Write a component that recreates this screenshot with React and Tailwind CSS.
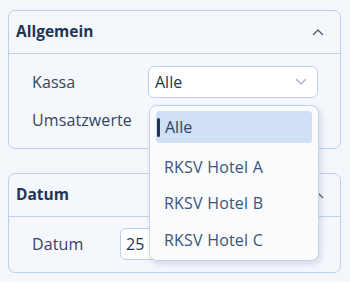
import React from "react";

const Up = ({ className }) => (
  <svg width="12" height="8" viewBox="0 0 12 8" className={className} fill="none">
    <path d="M1.5 6.5L6 2l4.5 4.5" stroke="currentColor" strokeWidth="1.4" strokeLinecap="round" strokeLinejoin="round" />
  </svg>
);
const Down = ({ className }) => (
  <svg width="12" height="8" viewBox="0 0 12 8" className={className} fill="none">
    <path d="M1.5 1.5L6 6l4.5-4.5" stroke="currentColor" strokeWidth="1.3" strokeLinecap="round" strokeLinejoin="round" />
  </svg>
);

export default function App() {
  return (
    <div
      className="w-[350px] h-[282px] bg-[#f3f6fb] relative overflow-hidden"
      style={{ fontFamily: '"Open Sans", "Noto Sans", sans-serif' }}
    >
      <div className="pt-[10px] px-[8px] pr-[9px] flex flex-col gap-[24px]">
        <div className="rounded-[7px] border-[1.5px] border-[#bcd0ea] bg-[#f4f7fc] h-[139px]">
          <div className="h-[43px] flex items-center justify-between pl-[7px] pr-[16px] border-b-[1.5px] border-[#bcd0ea]">
            <span className="text-[15.5px] font-bold text-[#1f3556]">Allgemein</span>
            <Up className="text-[#4b5c7a]" />
          </div>
          <div className="pl-[23px] pr-[22px] pt-[12px] flex flex-col gap-[10px]">
            <div className="flex items-center">
              <span className="w-[116px] text-[16px] text-[#34445f] tracking-[0.1px]">Kassa</span>
              <div className="flex-1 h-[32px] bg-white rounded-[6px] border-[1.5px] border-[#bcd0ea] flex items-center justify-between pl-[6px] pr-[10px]">
                <span className="text-[16px] text-[#1f3556]">Alle</span>
                <Down className="text-[#a3adbd]" />
              </div>
            </div>
            <div className="flex items-center">
              <span className="w-[116px] text-[16px] text-[#34445f] tracking-[0.1px]">Umsatzwerte</span>
            </div>
          </div>
        </div>
        <div className="rounded-[7px] border-[1.5px] border-[#bcd0ea] bg-[#f4f7fc] h-[100px]">
          <div className="h-[43px] flex items-center justify-between pl-[7px] pr-[16px] border-b-[1.5px] border-[#bcd0ea]">
            <span className="text-[15.5px] font-bold text-[#1f3556]">Datum</span>
            <Up className="text-[#4b5c7a]" />
          </div>
          <div className="pl-[23px] pt-[11px] flex items-center">
            <span className="w-[88px] text-[16px] text-[#34445f] tracking-[0.1px]">Datum</span>
            <div className="w-[120px] h-[32px] bg-white rounded-[6px] border-[1.5px] border-[#bcd0ea] flex items-center pl-[5px]">
              <span className="text-[16px] text-[#1f3556]">25</span>
            </div>
          </div>
        </div>
      </div>

      <div className="absolute left-[149px] top-[105px] w-[170px] h-[156px] bg-[#fafbfd] rounded-[8px] border-[1.5px] border-[#c3d5ed] shadow-[2px_3px_6px_rgba(60,80,120,0.18)] px-[6px] pt-[5px]">
        <div className="h-[32px] rounded-[4px] bg-[#cfe0f5] flex items-center pl-[1px]">
          <div className="w-[3px] h-[19px] rounded-full bg-[#1f3556]" />
          <span className="ml-[5px] text-[16px] text-[#2c4468]">Alle</span>
        </div>
        <div className="flex flex-col mt-[2px]">
          <div className="h-[38px] flex items-center pl-[8px] pt-[6px] text-[16px] text-[#3a5478] tracking-[0.2px]">RKSV Hotel A</div>
          <div className="h-[38px] flex items-center pl-[8px] pt-[1px] text-[16px] text-[#3a5478] tracking-[0.2px]">RKSV Hotel B</div>
          <div className="h-[38px] flex items-center pl-[8px] text-[16px] text-[#3a5478] tracking-[0.2px]">RKSV Hotel C</div>
        </div>
      </div>
    </div>
  );
}
